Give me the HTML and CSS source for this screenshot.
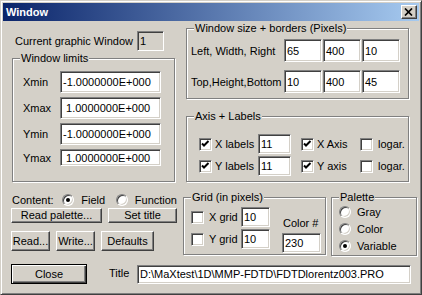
FILE: index.html
```html
<!DOCTYPE html>
<html lang="en">
<head>
    <meta charset="UTF-8">
    <title>Window</title>
    <link rel="stylesheet" href="styles.css">
</head>
<body>
    <div class="window">
        <div class="titlebar">
            <span class="title">Window</span>
            <span class="close-x">
                <svg width="10" height="8" viewBox="0 0 10 8"><path d="M1 0.5 L8 7.5 M8 0.5 L1 7.5" stroke="#000" stroke-width="1.7" fill="none"/></svg>
            </span>
        </div>

        <div class="client">
            <!-- top: limits + size/axis -->
            <div class="top">
                <div class="left-col">
                    <div class="current-row">
                        <span class="current-label">Current graphic Window</span>
                        <div class="field readonly cur-field">1</div>
                    </div>
                    <div class="group limits">
                        <div class="caption">Window limits</div>
                        <div class="limit-row"><span class="limit-label">Xmin</span><div class="field limit-field">-1.0000000E+000</div></div>
                        <div class="limit-row"><span class="limit-label">Xmax</span><div class="field limit-field">&nbsp;1.0000000E+000</div></div>
                        <div class="limit-row"><span class="limit-label">Ymin</span><div class="field limit-field">-1.0000000E+000</div></div>
                        <div class="limit-row short"><span class="limit-label">Ymax</span><div class="field limit-field">&nbsp;1.0000000E+000</div></div>
                    </div>
                </div>

                <div class="right-col">
                    <div class="group size">
                        <div class="caption">Window size + borders (Pixels)</div>
                        <div class="size-row first">
                            <span class="size-label">Left, Width, Right</span>
                            <div class="field size-field">65</div>
                            <div class="field size-field">400</div>
                            <div class="field size-field">10</div>
                        </div>
                        <div class="size-row">
                            <span class="size-label">Top,Height,Bottom</span>
                            <div class="field size-field">10</div>
                            <div class="field size-field">400</div>
                            <div class="field size-field">45</div>
                        </div>
                    </div>

                    <div class="group axis">
                        <div class="caption">Axis + Labels</div>
                        <div class="axis-row first">
                            <span class="check on"><svg width="9" height="9" viewBox="0 0 9 9"><path d="M1 3.5 L3 5.5 L7.5 1" stroke="#000" stroke-width="2" fill="none"/></svg></span>
                            <span class="axis-label">X labels</span>
                            <div class="field axis-field">11</div>
                            <span class="check on axis-gap"><svg width="9" height="9" viewBox="0 0 9 9"><path d="M1 3.5 L3 5.5 L7.5 1" stroke="#000" stroke-width="2" fill="none"/></svg></span>
                            <span class="axis-label">X Axis</span>
                            <span class="check"></span>
                            <span class="logar">logar.</span>
                        </div>
                        <div class="axis-row">
                            <span class="check on"><svg width="9" height="9" viewBox="0 0 9 9"><path d="M1 3.5 L3 5.5 L7.5 1" stroke="#000" stroke-width="2" fill="none"/></svg></span>
                            <span class="axis-label">Y labels</span>
                            <div class="field axis-field">11</div>
                            <span class="check on axis-gap"><svg width="9" height="9" viewBox="0 0 9 9"><path d="M1 3.5 L3 5.5 L7.5 1" stroke="#000" stroke-width="2" fill="none"/></svg></span>
                            <span class="axis-label">Y axis</span>
                            <span class="check"></span>
                            <span class="logar">logar.</span>
                        </div>
                    </div>
                </div>
            </div>

            <!-- middle: content, buttons, grid, palette -->
            <div class="middle">
                <div class="controls">
                    <div class="content-row">
                        <span class="content-label">Content:</span>
                        <span class="radio on"></span>
                        <span class="radio-text field-text">Field</span>
                        <span class="radio"></span>
                        <span class="radio-text">Function</span>
                    </div>
                    <div class="btn-row small">
                        <button class="btn palette-btn">Read palette...</button>
                        <button class="btn title-btn">Set title</button>
                    </div>
                    <div class="btn-row">
                        <button class="btn rw-btn">Read...</button>
                        <button class="btn rw-btn">Write...</button>
                        <button class="btn defaults-btn">Defaults</button>
                    </div>
                </div>

                <div class="group grid">
                    <div class="caption">Grid (in pixels)</div>
                    <div class="grid-body">
                        <div class="grid-rows">
                            <div class="grid-row">
                                <span class="check"></span>
                                <span class="grid-label">X grid</span>
                                <div class="field grid-field">10</div>
                            </div>
                            <div class="grid-row">
                                <span class="check"></span>
                                <span class="grid-label">Y grid</span>
                                <div class="field grid-field">10</div>
                            </div>
                        </div>
                        <div class="color-col">
                            <span class="color-label">Color #</span>
                            <div class="field color-field">230</div>
                        </div>
                    </div>
                </div>

                <div class="group palette">
                    <div class="caption">Palette</div>
                    <div class="pal-row"><span class="radio"></span><span class="radio-text">Gray</span></div>
                    <div class="pal-row"><span class="radio"></span><span class="radio-text">Color</span></div>
                    <div class="pal-row"><span class="radio on"></span><span class="radio-text">Variable</span></div>
                </div>
            </div>

            <!-- bottom: close + title -->
            <div class="bottom">
                <button class="btn default close-btn">Close</button>
                <span class="title-label">Title</span>
                <div class="field title-field">D:\MaXtest\1D\MMP-FDTD\FDTDlorentz003.PRO</div>
            </div>
        </div>
    </div>
</body>
</html>
```

FILE: styles.css
```css
body {
    margin: 0;
    font-family: "Liberation Sans", Arial, sans-serif;
    font-size: 11px;
    color: #000;
    background: #d4d0c8;
}
.window {
    width: 422px;
    height: 295px;
    box-sizing: border-box;
    background: #d4d0c8;
    border: 1px solid;
    border-color: #d4d0c8 #404040 #404040 #d4d0c8;
    box-shadow: inset 1px 1px 0 #fff, inset -1px -1px 0 #808080;
    padding: 2px;
}
.titlebar {
    height: 18px;
    background: linear-gradient(to right, #0a246a, #a6caf0);
    display: flex;
    align-items: center;
    padding: 0 2px 0 3px;
}
.title {
    color: #fff;
    font-weight: bold;
    font-size: 11px;
    flex: 1;
}
.close-x {
    width: 16px;
    height: 14px;
    box-sizing: border-box;
    background: #d4d0c8;
    border: 1px solid;
    border-color: #fff #404040 #404040 #fff;
    box-shadow: inset -1px -1px 0 #808080;
    display: flex;
    align-items: center;
    justify-content: center;
    padding-right: 1px;
}
.client {
    padding-top: 1px;
}

/* common widgets */
.field {
    box-sizing: border-box;
    background: #fff;
    border: 1px solid;
    border-color: #808080 #fff #fff #808080;
    box-shadow: inset 1px 1px 0 #404040, inset -1px -1px 0 #d4d0c8;
    padding: 0 0 0 2px;
    display: flex;
    align-items: center;
    white-space: nowrap;
    overflow: hidden;
    font-size: 11px;
}
.field.readonly {
    background: #d4d0c8;
}
.group {
    box-sizing: border-box;
    border: 1px solid #808080;
    box-shadow: inset 1px 1px 0 #fff, 1px 1px 0 #fff;
}
.caption {
    display: table;
    height: 13px;
    line-height: 13px;
    margin: -7px 0 0 7px;
    padding: 0 1px;
    background: #d4d0c8;
}
.check {
    width: 13px;
    height: 13px;
    flex: none;
    box-sizing: border-box;
    background: #fff;
    border: 1px solid;
    border-color: #808080 #fff #fff #808080;
    box-shadow: inset 1px 1px 0 #404040, inset -1px -1px 0 #d4d0c8;
    display: flex;
    align-items: center;
    justify-content: center;
}
.radio {
    width: 12px;
    height: 12px;
    flex: none;
    box-sizing: border-box;
    border-radius: 50%;
    background: #fff;
    border: 1px solid;
    border-color: #808080 #fff #fff #808080;
    box-shadow: inset 1px 1px 0 #404040, inset -1px -1px 0 #d4d0c8;
    display: flex;
    align-items: center;
    justify-content: center;
}
.radio.on::after {
    content: "";
    width: 4px;
    height: 4px;
    border-radius: 50%;
    background: #000;
}
.btn {
    box-sizing: border-box;
    font-family: inherit;
    font-size: 11px;
    color: #000;
    background: #d4d0c8;
    border: 1px solid;
    border-color: #fff #404040 #404040 #fff;
    box-shadow: inset -1px -1px 0 #808080;
    padding: 0;
    margin: 0;
}
.btn.default {
    border: 1px solid #000;
    box-shadow: inset 1px 1px 0 #fff, inset -1px -1px 0 #404040, inset -2px -2px 0 #808080;
}

/* top section */
.top {
    display: flex;
    align-items: flex-start;
    height: 160px;
}
.left-col {
    width: 163px;
    margin: 9px 0 0 9px;
}
.current-row {
    display: flex;
    align-items: center;
    height: 20px;
}
.current-label {
    width: 122px;
    padding-left: 3px;
}
.cur-field {
    width: 27px;
    height: 20px;
}
.limits {
    height: 124px;
    margin-top: 7px;
}
.limit-row {
    display: flex;
    align-items: center;
    padding-left: 10px;
    margin-top: 4px;
}
.limits .caption + .limit-row {
    margin-top: 6px;
}
.limit-label {
    width: 37px;
}
.limit-field {
    width: 101px;
    height: 22px;
}
.limit-row.short .limit-field {
    height: 17px;
}
.right-col {
    width: 223px;
    margin: 6px 0 0 11px;
}
.size {
    height: 71px;
}
.size-row {
    display: flex;
    align-items: center;
    padding-left: 4px;
    margin-top: 8px;
    gap: 1px;
}
.size-row.first {
    margin-top: 4px;
}
.size-label {
    width: 92px;
}
.size-field {
    width: 38px;
    height: 23px;
    padding-left: 2px;
}
.axis {
    height: 66px;
    margin-top: 17px;
}
.axis-row {
    display: flex;
    align-items: center;
    height: 20px;
    padding-left: 12px;
    margin-top: 2px;
}
.axis-row.first {
    margin-top: 11px;
}
.axis-label {
    width: 43px;
    margin-left: 3px;
}
.axis-field {
    width: 33px;
    height: 20px;
}
.axis-gap {
    margin-left: 10px;
}
.logar {
    margin-left: 5px;
}

/* middle section */
.middle {
    display: flex;
    align-items: flex-start;
    height: 82px;
}
.controls {
    width: 166px;
    margin-left: 8px;
}
.content-row {
    display: flex;
    align-items: center;
    height: 13px;
    margin-top: 11px;
    padding-left: 1px;
}
.content-label {
    width: 51px;
}
.radio-text {
    margin-left: 7px;
}
.field-text {
    width: 28px;
    margin-right: 7px;
}
.btn-row {
    display: flex;
    gap: 6px;
    margin-top: 8px;
}
.btn-row.small {
    margin-top: 2px;
}
.btn-row.small .btn {
    height: 15px;
    line-height: 11px;
}
.palette-btn {
    width: 91px;
}
.title-btn {
    width: 69px;
}
.rw-btn {
    width: 39px;
    height: 20px;
}
.defaults-btn {
    width: 53px;
    height: 20px;
}
.grid {
    width: 143px;
    height: 58px;
    margin: 15px 0 0 6px;
}
.grid-body {
    display: flex;
}
.grid-rows {
    padding-left: 7px;
}
.grid-row {
    display: flex;
    align-items: center;
    height: 20px;
    margin-top: 2px;
}
.grid-row:first-child {
    margin-top: 3px;
}
.grid-label {
    width: 32px;
    margin-left: 5px;
}
.grid-field {
    width: 29px;
    height: 20px;
}
.color-col {
    margin: 13px 0 0 12px;
}
.color-label {
    display: block;
    height: 13px;
    line-height: 13px;
    margin-left: 1px;
}
.color-field {
    width: 39px;
    height: 20px;
    margin-top: 3px;
}
.palette {
    width: 86px;
    height: 59px;
    margin: 15px 0 0 5px;
}
.pal-row {
    display: flex;
    align-items: center;
    height: 12px;
    padding-left: 7px;
    margin-top: 5px;
}
.palette .caption + .pal-row {
    margin-top: 2px;
}
.pal-row .radio-text {
    margin-left: 6px;
}

/* bottom row */
.bottom {
    display: flex;
    align-items: center;
    height: 20px;
}
.close-btn {
    width: 76px;
    height: 20px;
    margin-left: 8px;
}
.title-label {
    width: 28px;
    margin-left: 22px;
    margin-top: -2px;
}
.title-field {
    width: 274px;
    height: 19px;
}
```
